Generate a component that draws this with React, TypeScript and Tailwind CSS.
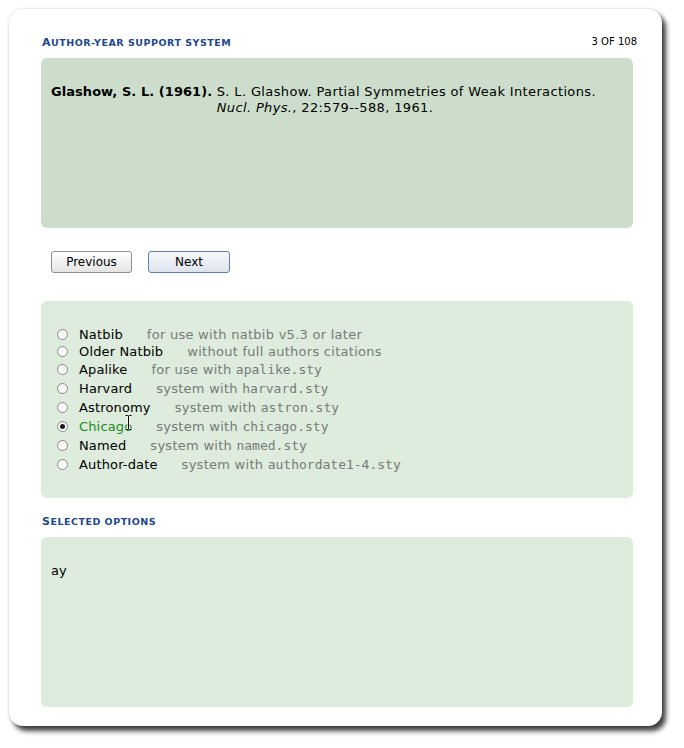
import React from "react";

const sans = "font-['DejaVu_Sans',sans-serif]";
const mono = "font-['DejaVu_Sans_Mono',monospace]";

type Opt = { label: string; pre: string; file?: string; h: string; checked?: boolean };

const options: Opt[] = [
  { label: "Natbib", pre: "for use with natbib v5.3 or later", h: "h-[17px]" },
  { label: "Older Natbib", pre: "without full authors citations", h: "h-[17px]" },
  { label: "Apalike", pre: "for use with ", file: "apalike.sty", h: "h-[19px]" },
  { label: "Harvard", pre: "system with ", file: "harvard.sty", h: "h-[19px]" },
  { label: "Astronomy", pre: "system with ", file: "astron.sty", h: "h-[19px]" },
  { label: "Chicago", pre: "system with ", file: "chicago.sty", h: "h-[19px]", checked: true },
  { label: "Named", pre: "system with ", file: "named.sty", h: "h-[19px]" },
  { label: "Author-date", pre: "system with ", file: "authordate1-4.sty", h: "h-[19px]" },
];

function Radio({ checked }: { checked?: boolean }) {
  return (
    <span className="w-[11px] h-[11px] rounded-full border border-[#8a8a8a] bg-gradient-to-b from-[#f2f2f2] to-white flex items-center justify-center shrink-0">
      {checked ? <span className="w-[5px] h-[5px] rounded-full bg-[#1a1a1a]" /> : null}
    </span>
  );
}

function IBeam() {
  return (
    <svg className="absolute left-[46px] top-[-2px]" width="7" height="15" viewBox="0 0 7 15">
      <path d="M0.5 0.5 H2.5 Q3.5 0.5 3.5 1.5 Q3.5 0.5 4.5 0.5 H6.5 M3.5 1.5 V13.5 M0.5 14.5 H2.5 Q3.5 14.5 3.5 13.5 Q3.5 14.5 4.5 14.5 H6.5" stroke="#ffffff" strokeWidth="2.2" fill="none" />
      <path d="M0.5 0.5 H2.5 Q3.5 0.5 3.5 1.5 Q3.5 0.5 4.5 0.5 H6.5 M3.5 1.5 V13.5 M0.5 14.5 H2.5 Q3.5 14.5 3.5 13.5 Q3.5 14.5 4.5 14.5 H6.5" stroke="#000000" strokeWidth="1" fill="none" />
    </svg>
  );
}

function Heading({ first, rest }: { first: string; rest: string }) {
  return (
    <h2 className="font-bold text-[#22478a] leading-[14px] h-[14px] pl-[1px] whitespace-pre tracking-[0.5px]">
      <span className="text-[11px]">{first}</span>
      <span className="text-[9.5px]">{rest}</span>
    </h2>
  );
}

export default function App() {
  return (
    <div className={`w-[684px] h-[748px] bg-white ${sans}`}>
      <div className="pt-[9px] pl-[9px]">
        <div className="w-[653px] h-[717px] bg-white rounded-[14px] shadow-[4px_5px_5px_rgba(0,0,0,0.75),0_0_3px_rgba(0,0,0,0.18)] pl-[32px] pr-[29px] pt-[25px]">
          <div className="flex items-start justify-between h-[14px]">
            <Heading first="A" rest="UTHOR-YEAR SUPPORT SYSTEM" />
            <span className="mt-[3px] text-[10px] text-black leading-none mr-[-4px]">3 OF 108</span>
          </div>

          <div className="mt-[10px] h-[170px] rounded-[6px] bg-[#ccdecb] pt-[26px] pl-[10px] text-[13px] leading-[16px] text-black">
            <div className="flex">
              <span className="font-bold whitespace-pre tracking-[0.05px]">Glashow, S. L. (1961). </span>
              <div className="tracking-[0.36px]">
                <div>S. L. Glashow. Partial Symmetries of Weak Interactions.</div>
                <div>
                  <i>Nucl. Phys.</i>, 22:579--588, 1961.
                </div>
              </div>
            </div>
          </div>

          <div className="flex gap-[16px] pl-[10px] mt-[23px]">
            <button className="w-[81px] h-[22px] rounded-[3px] border border-[#8f8f8f] bg-gradient-to-b from-white to-[#e4e4e4] text-[12px] text-black leading-none">
              Previous
            </button>
            <button className="w-[82px] h-[22px] rounded-[3px] border border-[#5d80b6] bg-gradient-to-b from-[#f6f8fb] to-[#dfe4ec] text-[12px] text-black leading-none">
              Next
            </button>
          </div>

          <div className="mt-[28px] h-[197px] rounded-[6px] bg-[#ddecdc] pt-[25px] pl-[16px]">
            {options.map((o) => (
              <div key={o.label} className={`flex items-center ${o.h} text-[13px]`}>
                <Radio checked={o.checked} />
                <span className={`relative ml-[11px] tracking-[0.15px] ${o.checked ? "text-[#1b8a1b]" : "text-black"}`}>
                  {o.label}
                  {o.checked ? <IBeam /> : null}
                </span>
                <span className="ml-[24px] text-[#7a7a7a] whitespace-pre">
                  <span className="tracking-[0.27px]">{o.pre}</span>
                  {o.file ? <span className={mono}>{o.file}</span> : null}
                </span>
              </div>
            ))}
          </div>

          <div className="mt-[15px]">
            <Heading first="S" rest="ELECTED OPTIONS" />
          </div>

          <div className="mt-[10px] h-[170px] rounded-[6px] bg-[#ddecdc] pt-[26px] pl-[10px] text-[13px] leading-[16px] text-black">
            ay
          </div>
        </div>
      </div>
    </div>
  );
}
